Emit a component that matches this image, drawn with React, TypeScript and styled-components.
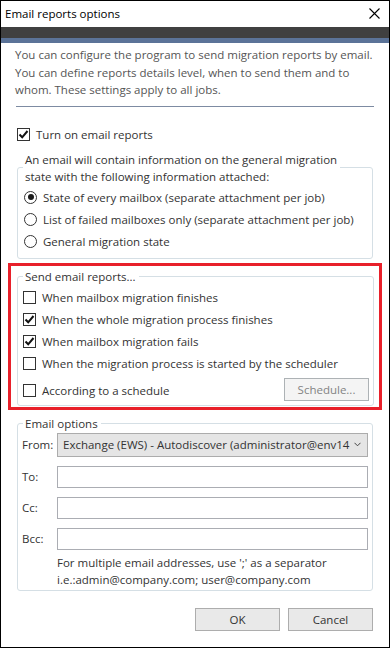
import React from "react";
import styled, { createGlobalStyle } from "styled-components";

const FONT = `"Open Sans", "Noto Sans", sans-serif`;

const Global = createGlobalStyle`
  html, body { margin: 0; padding: 0; background: #fff; }
  body { font-family: ${FONT}; font-size: 11.5px; color: #333; }
  * { box-sizing: border-box; }
`;

const Window = styled.div`
  width: 390px;
  height: 648px;
  border: 1px solid #000;
  display: flex;
  flex-direction: column;
  background: #fff;
`;

const TitleBar = styled.div`
  height: 26px;
  display: flex;
  align-items: center;
  justify-content: space-between;
  padding: 0 9px 2px 4px;
  color: #000;
  font-size: 11.5px;
`;

const DarkBand = styled.div`
  height: 11px;
  background: #404040;
`;

const BlueBand = styled.div`
  height: 5px;
  background: #5b7398;
`;

const Body = styled.div`
  padding: 0 16px;
  display: flex;
  flex-direction: column;
`;

const Description = styled.p`
  margin: 3px -8px 0 -2px;
  line-height: 17.5px;
  color: #555;
  white-space: nowrap;
`;

const Separator = styled.div`
  height: 1px;
  margin: 7px -1px 0 -1px;
  background: #7d8ba2;
`;

const Row = styled.label<{ $h?: number; $mt?: number }>`
  display: flex;
  align-items: center;
  gap: 6px;
  height: ${(p) => p.$h ?? 22}px;
  margin-top: ${(p) => p.$mt ?? 0}px;
  color: #333;
  white-space: nowrap;
`;

const Box = styled.span`
  width: 13px;
  height: 13px;
  border: 1px solid #333;
  background: #fff;
  display: inline-flex;
  align-items: center;
  justify-content: center;
  flex: none;
`;

const Round = styled.span`
  width: 13px;
  height: 13px;
  border: 1px solid #333;
  border-radius: 50%;
  background: #fff;
  display: inline-flex;
  align-items: center;
  justify-content: center;
  flex: none;
  margin-left: 1px;
`;

const Dot = styled.span`
  width: 6px;
  height: 6px;
  border-radius: 50%;
  background: #1a1a1a;
`;

const Group = styled.fieldset<{ $mt?: number; $pb?: number }>`
  margin: ${(p) => p.$mt ?? 0}px 0 0 0;
  padding: 0 4px ${(p) => p.$pb ?? 6}px 5px;
  border: 1px solid #d5dfe5;
  border-radius: 3px;
  min-width: 0;
`;

const Legend = styled.legend`
  padding: 0 3px 0 2px;
  line-height: 17px;
  color: #333;
  white-space: nowrap;
`;

const Highlight = styled.div`
  margin: 4px -9px 0 -9px;
  border: 3px solid #e8202a;
  padding: 2px 5px 1px 6px;
`;

const ScheduleRow = styled.div`
  display: flex;
  align-items: center;
  justify-content: space-between;
  margin-top: 3px;
  height: 23px;
`;

const Button = styled.button<{ $disabled?: boolean }>`
  width: 85px;
  height: 23px;
  font-family: ${FONT};
  font-size: 11.5px;
  border: 1px solid ${(p) => (p.$disabled ? "#adb2b5" : "#adadad")};
  background: ${(p) => (p.$disabled ? "#f4f4f4" : "#e9e9e9")};
  color: ${(p) => (p.$disabled ? "#838383" : "#333")};
  padding: 0;
  margin: 0;
`;

const Form = styled.div`
  display: grid;
  grid-template-columns: 34px 1fr;
  row-gap: 9px;
  align-items: center;
  padding-top: 1px;
`;

const FieldLabel = styled.span`
  color: #333;
  margin-left: -1px;
`;

const Select = styled.div`
  height: 24px;
  border: 1px solid #acacac;
  background: #e5e5e5;
  display: flex;
  align-items: center;
  justify-content: space-between;
  padding: 0 6px 0 5px;
  color: #333;
  white-space: nowrap;
`;

const Input = styled.div`
  height: 22px;
  border: 1px solid #abadb3;
  background: #fff;
`;

const Hint = styled.div`
  grid-column: 2;
  line-height: 17px;
  margin-top: -4.5px;
  color: #333;
  white-space: nowrap;
`;

const Footer = styled.div`
  display: flex;
  justify-content: flex-end;
  gap: 8px;
  margin-top: 17px;
`;

const Check = ({ on }: { on?: boolean }) => (
  <Box>
    {on && (
      <svg width="11" height="11" viewBox="0 0 11 11">
        <path d="M1.5 5.5 L4.2 8.3 L9.5 2" fill="none" stroke="#111" strokeWidth="2" />
      </svg>
    )}
  </Box>
);

const Radio = ({ on }: { on?: boolean }) => <Round>{on && <Dot />}</Round>;

export default function App() {
  return (
    <>
      <Global />
      <Window>
        <TitleBar>
          <span>Email reports options</span>
          <svg width="11" height="11" viewBox="0 0 11 11">
            <path d="M0.5 0.5 L10.5 10.5 M10.5 0.5 L0.5 10.5" stroke="#000" strokeWidth="1.1" />
          </svg>
        </TitleBar>
        <DarkBand />
        <BlueBand />
        <Body>
          <Description>
            You can configure the program to send migration reports by email.
            <br />
            You can define reports details level, when to send them and to
            <br />
            whom. These settings apply to all jobs.
          </Description>
          <Separator />
          <Row $h={16} $mt={20}>
            <Check on />
            Turn on email reports
          </Row>
          <Group $mt={8} $pb={6}>
            <Legend>
              An email will contain information on the general migration
              <br />
              state with the following information attached:
            </Legend>
            <Row $mt={1.5}>
              <Radio on />
              State of every mailbox (separate attachment per job)
            </Row>
            <Row>
              <Radio />
              List of failed mailboxes only (separate attachment per job)
            </Row>
            <Row>
              <Radio />
              General migration state
            </Row>
          </Group>
          <Highlight>
            <Group $pb={4}>
              <Legend>Send email reports...</Legend>
              <Row $mt={1.5}>
                <Check />
                When mailbox migration finishes
              </Row>
              <Row>
                <Check on />
                When the whole migration process finishes
              </Row>
              <Row>
                <Check on />
                When mailbox migration fails
              </Row>
              <Row>
                <Check />
                When the migration process is started by the scheduler
              </Row>
              <ScheduleRow>
                <Row $h={23} $mt={2}>
                  <Check />
                  According to a schedule
                </Row>
                <Button $disabled>Schedule...</Button>
              </ScheduleRow>
            </Group>
          </Highlight>
          <Group $mt={5} $pb={1.5}>
            <Legend>Email options</Legend>
            <Form>
              <FieldLabel>From:</FieldLabel>
              <Select>
                <span>Exchange (EWS) - Autodiscover (administrator@env14</span>
                <svg width="7" height="5" viewBox="0 0 7 5">
                  <path d="M0.5 0.8 L3.5 3.8 L6.5 0.8" fill="none" stroke="#444" strokeWidth="1" />
                </svg>
              </Select>
              <FieldLabel>To:</FieldLabel>
              <Input />
              <FieldLabel>Cc:</FieldLabel>
              <Input />
              <FieldLabel>Bcc:</FieldLabel>
              <Input />
              <Hint>
                For multiple email addresses, use ';' as a separator
                <br />
                i.e.:admin@company.com; user@company.com
              </Hint>
            </Form>
          </Group>
          <Footer>
            <Button>OK</Button>
            <Button>Cancel</Button>
          </Footer>
        </Body>
      </Window>
    </>
  );
}
